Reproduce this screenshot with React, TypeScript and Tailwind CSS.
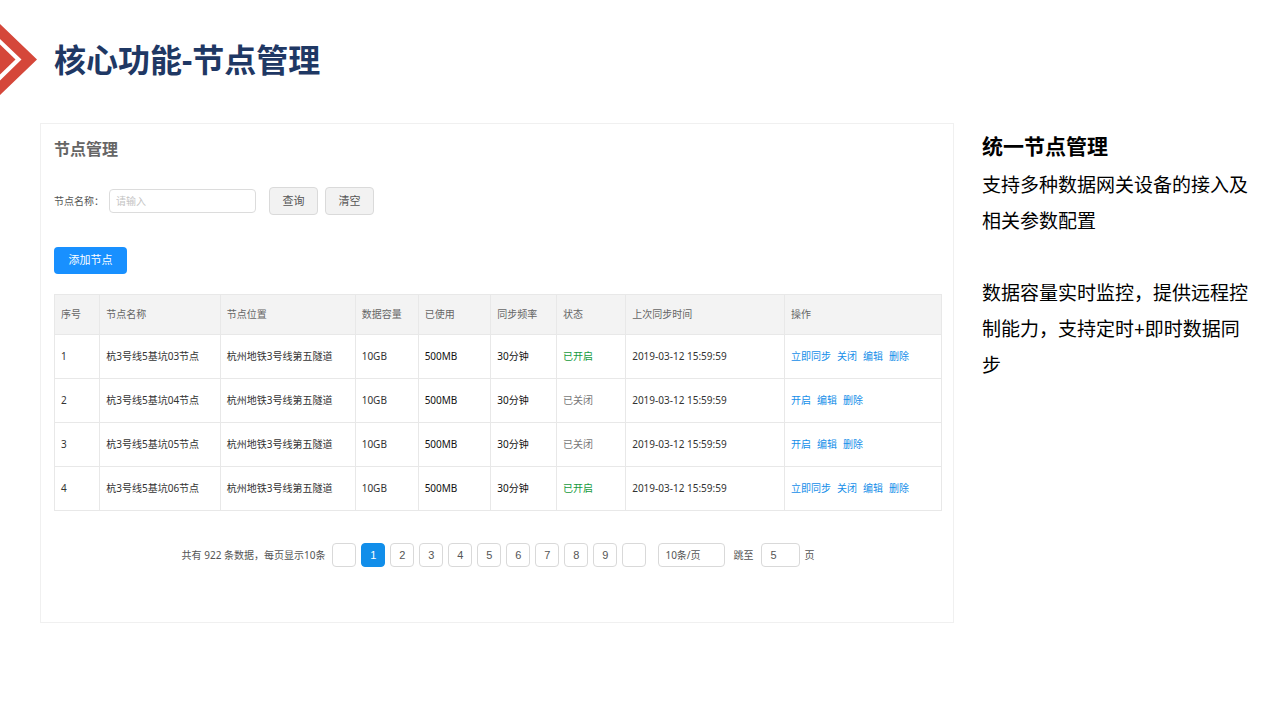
import { useState } from 'react';

interface NodeRow {
  id: number;
  name: string;
  location: string;
  capacity: string;
  used: string;
  frequency: string;
  enabled: boolean;
  lastSync: string;
}

const nodes: NodeRow[] = [
  { id: 1, name: '杭3号线5基坑03节点', enabled: true },
  { id: 2, name: '杭3号线5基坑04节点', enabled: false },
  { id: 3, name: '杭3号线5基坑05节点', enabled: false },
  { id: 4, name: '杭3号线5基坑06节点', enabled: true },
].map((node) => ({
  ...node,
  location: '杭州地铁3号线第五隧道',
  capacity: '10GB',
  used: '500MB',
  frequency: '30分钟',
  lastSync: '2019-03-12 15:59:59',
}));

const columns = [
  { label: '序号', width: 'w-[5.1%]' },
  { label: '节点名称', width: 'w-[13.6%]' },
  { label: '节点位置', width: 'w-[15.2%]' },
  { label: '数据容量', width: 'w-[7.1%]' },
  { label: '已使用', width: 'w-[8.2%]' },
  { label: '同步频率', width: 'w-[7.4%]' },
  { label: '状态', width: 'w-[7.8%]' },
  { label: '上次同步时间', width: 'w-[17.9%]' },
  { label: '操作', width: 'w-[17.7%]' },
];

const pages = [1, 2, 3, 4, 5, 6, 7, 8, 9];

function PageHeader() {
  return (
    <header className="flex items-center gap-4 pt-6">
      <svg className="h-[71px] w-[38px] shrink-0" viewBox="0 0 38 71" aria-hidden="true">
        <path d="M0 0 37 35.5 0 71V56.5L21.5 35.5 0 15Z" fill="#d5473a" />
        <path d="M0 20.5 15.5 35.5 0 50.5Z" fill="#d5473a" />
      </svg>
      <h1 className="text-[32px] leading-10 font-bold text-[#1f3864]">核心功能-节点管理</h1>
    </header>
  );
}

function SearchBar() {
  const [keyword, setKeyword] = useState('');

  return (
    <form className="mt-[26px] flex items-center" onSubmit={(e) => e.preventDefault()}>
      <label htmlFor="node-name" className="w-[55px] text-[10px] leading-4 text-[#555]">
        节点名称：
      </label>
      <input
        id="node-name"
        type="text"
        placeholder="请输入"
        value={keyword}
        onChange={(e) => setKeyword(e.target.value)}
        className="h-6 w-[147px] rounded border border-[#dcdcdc] px-1.5 text-[10px] text-[#555] placeholder:text-[#c4c4c4]"
      />
      <button
        type="submit"
        className="ml-[13px] h-7 w-[49px] rounded border border-[#dadada] bg-[#f2f2f2] text-[11px] text-[#555]"
      >
        查询
      </button>
      <button
        type="button"
        onClick={() => setKeyword('')}
        className="ml-[7px] h-7 w-[49px] rounded border border-[#dadada] bg-[#f2f2f2] text-[11px] text-[#555]"
      >
        清空
      </button>
    </form>
  );
}

function NodeTable() {
  return (
    <table className="mt-5 w-full table-fixed border-collapse text-left text-[10px] leading-4 whitespace-nowrap text-[#333]">
      <thead>
        <tr className="h-10 bg-[#f3f3f3] text-[#666]">
          {columns.map((col) => (
            <th key={col.label} className={`border border-[#e8e8e8] px-1.5 pb-0.5 font-normal ${col.width}`}>
              {col.label}
            </th>
          ))}
        </tr>
      </thead>
      <tbody>
        {nodes.map((node) => {
          const actions = node.enabled
            ? ['立即同步', '关闭', '编辑', '删除']
            : ['开启', '编辑', '删除'];

          return (
            <tr key={node.id} className="h-11">
              <td className="border border-[#e8e8e8] px-1.5 pb-0.5">{node.id}</td>
              <td className="border border-[#e8e8e8] px-1.5 pb-0.5">{node.name}</td>
              <td className="border border-[#e8e8e8] px-1.5 pb-0.5">{node.location}</td>
              <td className="border border-[#e8e8e8] px-1.5 pb-0.5">{node.capacity}</td>
              <td className="border border-[#e8e8e8] px-1.5 pb-0.5 text-[#111]">{node.used}</td>
              <td className="border border-[#e8e8e8] px-1.5 pb-0.5 text-[#111]">{node.frequency}</td>
              <td className={`border border-[#e8e8e8] px-1.5 pb-0.5 ${node.enabled ? 'text-[#159a3c]' : 'text-[#777]'}`}>
                {node.enabled ? '已开启' : '已关闭'}
              </td>
              <td className="border border-[#e8e8e8] px-1.5 pb-0.5">{node.lastSync}</td>
              <td className="border border-[#e8e8e8] px-1.5 pb-0.5">
                <div className="flex gap-1.5">
                  {actions.map((action) => (
                    <a key={action} href="#" className="text-[#148ee9]">
                      {action}
                    </a>
                  ))}
                </div>
              </td>
            </tr>
          );
        })}
      </tbody>
    </table>
  );
}

function Pagination() {
  const [current, setCurrent] = useState(1);

  return (
    <nav className="mt-8 flex items-center justify-center text-[10px] leading-4 whitespace-nowrap text-[#555]">
      <span className="mr-[7px]">共有 922 条数据，每页显示10条</span>
      <div className="flex gap-[5px] font-['Liberation_Sans',sans-serif] text-[11px]">
        <button type="button" aria-label="上一页" className="size-6 rounded border border-[#d9d9d9]" />
        {pages.map((page) => (
          <button
            key={page}
            type="button"
            onClick={() => setCurrent(page)}
            className={`size-6 rounded border ${
              page === current ? 'border-[#118eea] bg-[#118eea] text-white' : 'border-[#d9d9d9]'
            }`}
          >
            {page}
          </button>
        ))}
        <button type="button" aria-label="下一页" className="size-6 rounded border border-[#d9d9d9]" />
      </div>
      <select
        aria-label="每页条数"
        className="ml-3 h-6 w-[67px] appearance-none rounded border border-[#d9d9d9] px-1.5"
      >
        <option>10条/页</option>
      </select>
      <label htmlFor="jump-page" className="mx-2">
        跳至
      </label>
      <input
        id="jump-page"
        type="text"
        defaultValue="5"
        className="mr-1 h-6 w-[39px] rounded border border-[#d9d9d9] px-2 font-['Liberation_Sans',sans-serif] text-[11px]"
      />
      <span>页</span>
    </nav>
  );
}

export default function App() {
  return (
    <div className="min-h-screen bg-white font-['Noto_Sans','Noto_Sans_CJK_SC',sans-serif]">
      <PageHeader />

      <main className="mt-7 flex items-start gap-7 pr-6 pl-10">
        <section className="min-w-0 flex-1 border border-[#f0f0f0] pt-[13px] pr-[11px] pb-[55px] pl-[13px]">
          <h2 className="text-base leading-6 font-bold text-[#666]">节点管理</h2>
          <SearchBar />
          <button
            type="button"
            className="mt-8 h-[27px] w-[73px] rounded bg-[#1890ff] text-[11px] text-white"
          >
            添加节点
          </button>
          <NodeTable />
          <Pagination />
        </section>

        <aside className="w-[274px] shrink-0 pt-1 text-[19px] leading-9 text-black">
          <h2 className="mb-0.5 text-[21px] leading-[38px] font-bold">统一节点管理</h2>
          <p>支持多种数据网关设备的接入及相关参数配置</p>
          <p className="mt-9">数据容量实时监控，提供远程控制能力，支持定时+即时数据同步</p>
        </aside>
      </main>
    </div>
  );
}
